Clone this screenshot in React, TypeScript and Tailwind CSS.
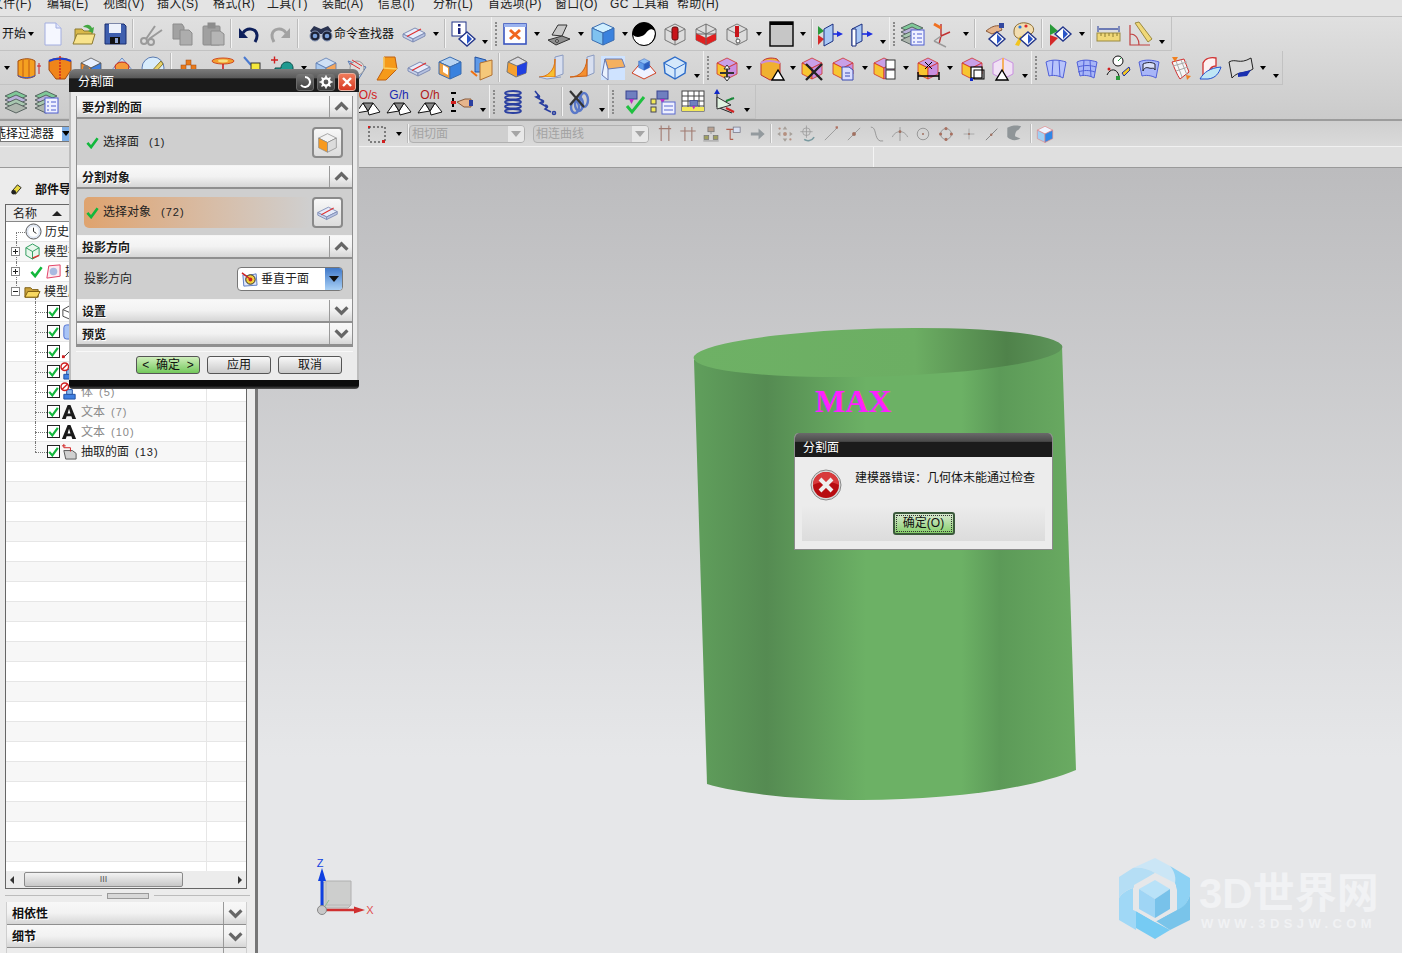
import type { ReactNode } from "react";

const CJK = "font-['Liberation_Sans','Noto_Sans_CJK_SC',sans-serif]";

function Cube({ t, l, r, s = "#555" }: { t: string; l: string; r: string; s?: string }) {
  return (
    <g stroke={s} strokeWidth="0.8" strokeLinejoin="round">
      <polygon points="13,3 23,8 13,13 3,8" fill={t} />
      <polygon points="3,8 13,13 13,24 3,19" fill={l} />
      <polygon points="23,8 13,13 13,24 23,19" fill={r} />
    </g>
  );
}

function Wire({ s = "#777" }: { s?: string }) {
  return (
    <g fill="none" stroke={s} strokeWidth="1">
      <polygon points="13,3 23,8 23,19 13,24 3,19 3,8" />
      <path d="M3 8l10 5 10-5M13 13v11" />
    </g>
  );
}

const Triangle = () => <polygon points="20,15 26,25 14,25" fill="#fff" stroke="#000" strokeWidth="1.4" />;

const purple = { t: "#c9a0e8", l: "#f7c531", r: "#c98fe0", s: "#d0302a" };
const slab = (
  <g strokeLinejoin="round">
    <polygon points="2,13 14,7 24,12 12,18" fill="#e6ecfa" stroke="#7f8db5" />
    <polygon points="2,13 12,18 12,21 2,16" fill="#c9d2ea" stroke="#7f8db5" />
    <polygon points="24,12 12,18 12,21 24,15" fill="#b7c3e2" stroke="#7f8db5" />
    <path d="M6 15.5L20 8" stroke="#e03030" strokeWidth="1.2" />
  </g>
);
const diamond = (
  <g>
    <polygon points="17,11 25,18 17,25 9,18" fill="#fff" stroke="#22358a" strokeWidth="1.4" />
    <polygon points="17,13 22,18 17,23" fill="#2a55c8" />
  </g>
);
const stack = (
  <g stroke="#4e5a58" strokeWidth="0.9">
    <polygon points="12,2 23,7 12,12 1,7" fill="#7fc898" />
    <polygon points="12,6 23,11 12,16 1,11" fill="#b8b0d8" />
    <polygon points="12,10 23,15 12,20 1,15" fill="#a8c8b0" />
    <polygon points="12,14 23,19 12,24 1,19" fill="#aeb6ae" />
  </g>
);
const listBox = (
  <g>
    <rect x="11" y="9" width="13" height="15" fill="#eef0ff" stroke="#4f5fd0" />
    <path d="M13 13h2M17 13h5M13 17h2M17 17h5M13 21h2M17 21h5" stroke="#4f5fd0" strokeWidth="1.2" />
  </g>
);
const probe = (
  <g>
    <rect x="7" y="2" width="11" height="8" fill="#6f7fc0" stroke="#3a4590" />
    <polygon points="10,10 15,10 12.5,15" fill="#c02fc0" />
  </g>
);
const surface = (c: string, grid: ReactNode) => (
  <g>
    <path d="M4 7C10 4 18 5 24 7L21 23C16 20 10 20 7 21Z" fill={c} stroke="#5060d8" />
    {grid}
  </g>
);
const coneSolid = (label: string, c: string) => (
  <g>
    <path d="M1 24L8 14L13 22ZM13 22L18 14L25 23L14 26Z" fill="#fff" stroke="#111" />
    <path d="M8 14L18 14L13 22Z" fill="#888" stroke="#111" />
    <text x="13" y="10" textAnchor="middle" fontSize="12" fill={c} fontFamily="Liberation Sans">{label}</text>
  </g>
);

const icons: Record<string, ReactNode> = {
  doc: <><path d="M5 2h11l5 5v17H5z" fill="#f5f7ff" stroke="#a3aee0" /><path d="M16 2v5h5" fill="#dfe4fb" stroke="#a3aee0" /></>,
  folder: <><path d="M4 8h7l2 2h8v11H4z" fill="#d9b84a" stroke="#8c7a30" /><path d="M2 23l4-10h18l-3 10z" fill="#f8e38c" stroke="#8c7a30" /><path d="M12 6c3-3 7-3 9 1l2-1-1 6-5-2 2-1c-2-2-4-3-7-3z" fill="#43a843" /></>,
  save: <><path d="M3 3h19l2 2v18H3z" fill="#3f5fae" stroke="#1b2f70" /><rect x="7" y="3" width="12" height="9" fill="#eef2fb" /><rect x="8" y="16" width="10" height="7" fill="#111" /><rect x="13" y="17" width="3" height="5" fill="#8fa4d0" /></>,
  scissors: <g fill="none" stroke="#9a9a9a" strokeWidth="2"><circle cx="6" cy="20" r="3" /><circle cx="13" cy="21" r="3" /><path d="M8 18L17 5M11 18L24 9" /></g>,
  copy: <g fill="#a2a2a2" stroke="#8c8c8c"><path d="M4 3h9l2 3v12H4z" /><path d="M11 9h9l3 3v12H11z" fill="#adadad" /></g>,
  paste: <g stroke="#8c8c8c"><rect x="3" y="5" width="17" height="19" rx="1" fill="#a0a0a0" /><rect x="8" y="2" width="7" height="5" fill="#8d8d8d" /><path d="M11 10h9l4 3v11H11z" fill="#b5b5b5" /></g>,
  undo: <g fill="none" stroke="#0d1f5a" strokeWidth="3"><path d="M7 12C11 6 20 7 21 14c.3 3-1 5-2 7" /><path d="M3 7v10h9" fill="#0d1f5a" stroke="none" /></g>,
  redo: <g fill="none" stroke="#a2a2a2" strokeWidth="3"><path d="M19 12C15 6 6 7 5 14c-.3 3 1 5 2 7" /><path d="M23 7v10h-9" fill="#a2a2a2" stroke="none" /></g>,
  binoculars: <g><path d="M2 10l4-5 7 3 7-3 4 5-3 3H5z" fill="#2a3350" /><circle cx="7" cy="15" r="5" fill="#1c2236" stroke="#7f8fb0" /><circle cx="19" cy="15" r="5" fill="#1c2236" stroke="#7f8fb0" /><circle cx="7" cy="15" r="2.300" fill="#7aa0d8" /><circle cx="19" cy="15" r="2.300" fill="#7aa0d8" /></g>,
  slab,
  info: <><rect x="2" y="1" width="14" height="14" fill="#fff" stroke="#22358a" /><rect x="8" y="3" width="2.5" height="2.5" fill="#1a237e" /><rect x="8" y="7" width="2.5" height="6" fill="#1a237e" />{diamond}</>,
  fit: <><rect x="2" y="3" width="22" height="20" fill="#fdfdff" stroke="#3a55c0" strokeWidth="1.6" /><rect x="2" y="3" width="22" height="3" fill="#9bb3ef" /><path d="M8 9l10 9M18 9L8 18" stroke="#f0651f" strokeWidth="3" /></>,
  laptop: <g stroke="#333"><path d="M6 14L12 4h9l-5 11z" fill="#c9c9c9" /><polygon points="2,19 16,15 24,18 10,24" fill="#8e8e8e" /><circle cx="11" cy="20" r="1.4" fill="#ddd" /></g>,
  blue: <><polygon points="13,2 24,7 13,12 2,7" fill="#d0efff" stroke="#3b6db0" /><polygon points="2,7 13,12 13,24 2,19" fill="#7fc2f0" stroke="#3b6db0" /><polygon points="24,7 13,12 13,24 24,19" fill="#3a82de" stroke="#3b6db0" /></>,
  yin: <><circle cx="13" cy="13" r="11.500" fill="#000" /><path d="M2 16c6 5 8-2 11-4s8-3 11 0c0-6-5-10.500-11-10.500-6 0-11.500 6-11 14.500z" fill="#fff" transform="rotate(180 13 13)" /><circle cx="13" cy="13" r="11.500" fill="none" stroke="#000" /></>,
  wirePin: <><Wire /><rect x="10" y="6" width="6" height="13" rx="2" fill="#c8141a" stroke="#601010" /></>,
  wireBox: <><Wire /><path d="M3 12l10 5 10-5v7l-10 5-10-5z" fill="#e02020" /><path d="M13 3v21M3 13h20" stroke="#666" fill="none" /></>,
  wireTack: <><Wire /><rect x="11" y="5" width="4" height="11" fill="#c8141a" /><circle cx="14" cy="20" r="2" fill="#fff" stroke="#555" /></>,
  frame: <><rect x="2" y="1" width="23" height="24" fill="#c6c6c6" stroke="#000" strokeWidth="1.4" /><rect x="2" y="1" width="23" height="3" fill="#000" /></>,
  panelIn: <><polygon points="1,5 7,10 1,14" fill="#2a9a3a" /><polygon points="1,14 7,18 1,24" fill="#d42a2a" /><polygon points="7,8 16,3 16,20 7,25" fill="#a9c8f5" stroke="#1b2f80" /><path d="M16 13h8" stroke="#1e2fe0" strokeWidth="1.6" /><polygon points="20,10 26,13 20,16" fill="#1e2fe0" /></>,
  panelOut: <><polygon points="4,8 14,3 14,20 4,25" fill="#a9c8f5" stroke="#1b2f80" /><polygon points="4,8 8,8 8,25 4,25" fill="#fff" stroke="#1b2f80" /><path d="M14 13h8" stroke="#1e2fe0" strokeWidth="1.6" /><polygon points="19,10 25,13 19,16" fill="#1e2fe0" /></>,
  layersList: <>{stack}{listBox}</>,
  csys: <g fill="none" strokeWidth="1.4"><path d="M10 15L19 11M10 15V3M10 15l-2 8" stroke="#c03030" /><path d="M3 20l7-5M3 20l12 6" stroke="#9a9a9a" /><path d="M3 3l7 4" stroke="#f07020" strokeWidth="3" /></g>,
  hand: <><path d="M6 10c5-4 9-6 14-5l2 4-10 4z" fill="#e6b58c" stroke="#8a5a3a" /><rect x="19" y="2" width="5" height="5" fill="#33489f" />{diamond}</>,
  palette: <><path d="M3 10c0-6 6-9 12-8s9 5 7 9-9 1-10 4-5 3-7 1-2-3-2-6z" fill="#f2ddb0" stroke="#8a6a30" /><circle cx="9" cy="6" r="1.6" fill="#2a7ae0" /><circle cx="15" cy="5" r="1.6" fill="#e02a2a" /><path d="M4 24l5-9 3 1-4 9z" fill="#f2c520" />{diamond}</>,
  playDiamond: <><polygon points="3,3 11,10 3,14" fill="#2a9a3a" /><polygon points="3,14 11,17 3,25" fill="#d42a2a" /><g transform="translate(-1,-5)">{diamond}</g></>,
  ruler: <><rect x="1" y="12" width="23" height="8" fill="#f0d878" stroke="#9a8a40" /><path d="M5 12v3M9 12v4M13 12v3M17 12v4M21 12v3" stroke="#8a7a30" /><path d="M3 8h19" stroke="#223a9a" strokeWidth="1.2" /><path d="M2 5v6M23 5v6" stroke="#223a9a" /></>,
  angle: <><path d="M8 2l4-1 13 17-4 3z" fill="#f0d878" stroke="#9a8a40" /><path d="M3 4v20h20M3 13c6 0 9 5 9 11" fill="none" stroke="#c04040" strokeWidth="1.2" /></>,
  extrude: <><path d="M2 6c5-3 13-3 17 0v15c-5 3-12 3-17 0z" fill="#f5a020" stroke="#a04a10" /><path d="M7 5v18M13 5v18" stroke="#c05a10" /><path d="M2 20c5 3 12 3 17 0v1c-5 3-12 3-17 0z" fill="#3a5ad0" /><path d="M23 8v11M21 11h4" stroke="#d02020" /></>,
  revolve: <><path d="M2 6c6-4 16-4 22 0v9l-6 9H9l-7-9z" fill="#f0851a" stroke="#a04a10" /><path d="M2 6c6-3 16-3 22 0" fill="none" stroke="#2040d0" strokeWidth="2" /><path d="M13 1v24" stroke="#d02020" strokeDasharray="2 1" strokeWidth="1.4" /></>,
  hole: <><Cube t="#e8f0ff" l="#f28a2a" r="#3f7fe0" /><ellipse cx="8" cy="14" rx="3" ry="4" fill="#777" /></>,
  dome: <><path d="M2 16L13 3l11 13-11 7z" fill="#cfe4fa" stroke="#6a8ac0" /><ellipse cx="13" cy="12" rx="7" ry="5" fill="#f59a3a" stroke="#c02020" /></>,
  disc: <><circle cx="13" cy="13" r="11" fill="#d8ecfb" stroke="#5a7ab0" /><path d="M8 20L21 6l2 3L11 22z" fill="#e9d36a" stroke="#8a7a30" /></>,
  dots: <g fill="#e87a1a" stroke="#a04a10" strokeWidth="0.5"><rect x="10" y="5" width="5" height="5" /><rect x="5" y="10" width="5" height="5" /><rect x="15" y="10" width="5" height="5" /><rect x="1" y="15" width="5" height="5" /><rect x="10" y="15" width="5" height="5" /><rect x="20" y="15" width="5" height="5" /></g>,
  pinDisc: <><ellipse cx="13" cy="6" rx="11" ry="3" fill="#f2a030" stroke="#d04a20" /><ellipse cx="13" cy="6" rx="5" ry="1.4" fill="#f8e080" /><path d="M13 9v13" stroke="#d02020" strokeWidth="1.6" /><path d="M10 22h6" stroke="#d02020" /></>,
  corner: <><path d="M3 2l7 8" stroke="#4a7ad0" strokeWidth="2" /><rect x="10" y="8" width="9" height="9" fill="#f5e83a" stroke="#333" /><path d="M3 24h16" stroke="#888" /></>,
  plusBoss: <><path d="M2 5h7M5.5 1.500v7" stroke="#d02020" strokeWidth="1.4" /><path d="M6 13h6c0-8 12-8 12 0v9H6z" fill="#1f9a90" stroke="#0b4a46" /></>,
  ghost: <><Cube t="#cfe0f5" l="#a8c8ee" r="#f6a65a" s="#5a7ab0" /></>,
  cutPlane: <><path d="M4 6L22 12 14 25z" fill="#bcd4f2" stroke="#5a7ab0" /><circle cx="13" cy="13" r="7" fill="#dcdcdc" stroke="#999" /><path d="M8 5l10 6M6 8l10 6" stroke="#e03030" /></>,
  flame: <><path d="M9 2h11l2 12L11 25H2l7-12z" fill="#f59a1a" stroke="#c06010" /><path d="M9 2v11l13 1" fill="none" stroke="#fbd060" strokeWidth="1.5" /></>,
  shell: <><polygon points="13,2 24,7 13,12 2,7" fill="#b8d4f2" stroke="#3b6db0" /><polygon points="2,7 13,12 13,24 2,19" fill="#f0a040" stroke="#3b6db0" /><polygon points="24,7 13,12 13,24 24,19" fill="#3a82de" stroke="#3b6db0" /><polygon points="6,10 11,13 11,20 6,17" fill="#fff" /></>,
  offsetFace: <><path d="M7 2l11 3v12H7z" fill="#5f9ae8" stroke="#2050a0" /><path d="M12 8l12-3v15l-12 5z" fill="#f5c87a" stroke="#b07030" /><path d="M3 16l6 5" stroke="#f07010" strokeWidth="2" /></>,
  blend: <><path d="M4 7l10-5 9 5-1 11-10 4-9-5z" fill="#f5a030" stroke="#777" /><polygon points="4,7 14,2 23,7 13,11" fill="#dcdce2" stroke="#777" /><polygon points="13,11 23,7 22,18 13,21" fill="#2040e0" /></>,
  fillet1: <><path d="M17 2l8-2v19l-8 3z" fill="#d8dff0" stroke="#8a9ac0" /><path d="M1 22c8 0 16-6 16-18v18z" fill="#f8c030" stroke="#e07010" /><path d="M1 22l8 2 14-2" stroke="#8a9ac0" fill="#d8dff0" /></>,
  fillet2: <><path d="M18 2l7-2v18l-7 3z" fill="#d8dff0" stroke="#8a9ac0" /><path d="M1 22c9 0 16-6 17-18v17z" fill="#f59030" stroke="#d06010" /></>,
  chamfer: <><rect x="1" y="1" width="24" height="24" fill="#cfe3ff" /><polygon points="5,4 22,4 25,12 8,14" fill="#f5b060" stroke="#6a7ab0" /><polygon points="5,4 8,14 8,25 2,20" fill="#eaf2ff" stroke="#6a7ab0" /></>,
  pyramid: <><polygon points="13,4 25,18 13,24 1,18" fill="#eef2ff" stroke="#d04020" /><g transform="translate(6,2) scale(.55)"><Cube t="#8fc0f5" l="#5f9ae8" r="#2a5fc0" s="#2a5fc0" /></g></>,
  wireBlue: <><polygon points="13,2 24,8 23,18 13,24 3,18 2,8" fill="#d4e8fb" stroke="#2a6ac8" strokeWidth="1.4" /><path d="M2 8l11 6 11-6M13 14v10" stroke="#2a6ac8" fill="none" /></>,
  moveFace: <><Cube {...purple} /><path d="M13 12v13M6 18h14" stroke="#333" strokeWidth="2" /><polygon points="13,10 16,14 10,14" fill="#fff" stroke="#333" /><polygon points="13,26 16,22 10,22" fill="#fff" stroke="#333" /></>,
  coneFace: <><path d="M3 8c3-5 10-6 16-4l3 4v13l-10 4-9-5z" fill="#f0b030" stroke="#c03030" /><path d="M3 8c6-3 13-2 19 0" fill="none" stroke="#c98fe0" strokeWidth="2" /><Triangle /></>,
  xFace: <><Cube {...purple} /><path d="M7 9l16 16M23 9L7 25" stroke="#222" strokeWidth="2.4" /></>,
  copyFace: <><Cube {...purple} /><path d="M12 12h7l4 3v10H12z" fill="#d8dcff" stroke="#3a4ab0" /><path d="M15 18h5M15 21h5" stroke="#3a4ab0" /></>,
  splitFace: <><Cube {...purple} /><rect x="15" y="5" width="9" height="9" fill="#fff" stroke="#333" /><rect x="15" y="15" width="9" height="9" fill="#fff" stroke="#333" /></>,
  dimFace: <><Cube {...purple} /><path d="M3 21h21M3 17v8M24 17v8" stroke="#000" strokeWidth="1.4" /><path d="M10 7l7 7M17 7l-7 7" stroke="#000" /></>,
  boxFace: <><Cube {...purple} /><rect x="12" y="12" width="11" height="11" fill="#fff" stroke="#000" strokeWidth="1.2" /><rect x="15" y="15" width="10" height="9" fill="none" stroke="#000" /><rect x="11" y="23" width="3" height="3" fill="#1028c8" /></>,
  triFace: <><polygon points="13,3 23,8 23,19 13,24 3,19 3,8" fill="#f1e1f5" stroke="#c98fe0" /><path d="M13 3v21" stroke="#f5b060" strokeWidth="2" /><g transform="translate(-8,0)"><Triangle /></g></>,
  surf1: surface("#b8c4fb", <path d="M11 5l-1 16M17 5l1 17" stroke="#5060d8" fill="none" />),
  surf2: surface("#a8b6f8", <path d="M11 5l-1 16M17 5l1 17M5 12c6-2 12-2 18 0M5 17c6-2 11-2 17 0" stroke="#5060d8" fill="none" />),
  curveEdit: <><circle cx="14" cy="6" r="5" fill="#fff" stroke="#111" /><path d="M14 6l3-3" stroke="#1a9a3a" /><path d="M3 20c3-7 10-7 12 1" fill="none" stroke="#111" /><circle cx="5" cy="14" r="1.5" fill="#d02020" /><path d="M18 18l7-6 1 3-6 6z" fill="#f2c520" stroke="#2030a0" /><rect x="12" y="21" width="4" height="4" fill="#2a9a3a" /></>,
  surf3: surface("#a8b6f8", <path d="M8 9c4-2 9-2 12 0v6c-1-3-3-1-6-2s-5 0-6 3z" fill="#d8def8" stroke="#223" />),
  meshArrows: <><path d="M6 7l12-3 5 13-9 7C11 20 8 12 6 7z" fill="#f6f6f6" stroke="#d03030" /><path d="M10 6l6 16M15 5l6 15M7 11l14-4M10 16l12-4" stroke="#aaa" /><polygon points="6,2 12,2 9,7" fill="#f08020" /><polygon points="20,20 25,21 21,25" fill="#f08020" /></>,
  loft: <><path d="M6 8c2-5 8-6 13-5v8c-4 0-6 2-7 6l-6 3z" fill="#fdf2f2" stroke="#d03030" strokeWidth="1.3" /><path d="M3 24c4-7 10-11 21-12-2 6-5 11-13 12z" fill="#bfe6f5" stroke="#2050d0" /></>,
  cloth: <><path d="M1 7c7-4 10 3 22-4l2 11c-9 6-14 1-21 9z" fill="#d9d9d9" stroke="#222" /><path d="M10 18l13-3-4 6-9 1z" fill="#1a30b0" /></>,
  coil: <g fill="none" stroke="#2a3fa0" strokeWidth="1.8"><ellipse cx="13" cy="4" rx="8" ry="2" /><ellipse cx="13" cy="8.500" rx="8" ry="2" /><ellipse cx="13" cy="13" rx="8" ry="2" /><ellipse cx="13" cy="17.500" rx="8" ry="2" /><ellipse cx="13" cy="22" rx="8" ry="2" /></g>,
  spring: <g fill="none" stroke="#2a3fa0" strokeWidth="1.6"><path d="M4 2l4 5-3 1 7 4-3 2 7 4-2 2 6 3" /><path d="M6 6c3 0 3 3 1 3M10 11c3 0 3 3 1 3M14 16c3 0 3 3 1 3" /><circle cx="23" cy="24" r="1.5" /></g>,
  coilX: <><g fill="none" stroke="#5a78c8" strokeWidth="2.4"><ellipse cx="17" cy="11" rx="4" ry="7" /><ellipse cx="12" cy="15" rx="4" ry="7" /><ellipse cx="8" cy="18" rx="4" ry="6" /></g><path d="M3 2l14 16M15 2L3 16" stroke="#333" strokeWidth="2.2" /></>,
  stackL: <g><g transform="translate(1,0)">{stack}</g></g>,
  stackM: <>{stack}{listBox}</>,
  coneOs: coneSolid("O/s", "#d02020"),
  coneGh: coneSolid("G/h", "#1a28b0"),
  coneOh: coneSolid("O/h", "#b01a1a"),
  handPoint: <><path d="M3 4h5M3 22h5M5 9v9" stroke="#000" strokeWidth="2" /><rect x="3" y="12" width="5" height="3" fill="#d02020" /><path d="M9 13l8-3h6v8h-7z" fill="#e6b58c" stroke="#8a5a3a" /><rect x="21" y="11" width="4" height="6" fill="#2a3fa0" /></>,
  probeCheck: <>{probe}<path d="M8 17l5 6L25 8" fill="none" stroke="#1fc040" strokeWidth="3" /></>,
  probeTree: <>{probe}<rect x="1" y="10" width="5" height="5" fill="#f2e85a" stroke="#445" /><rect x="1" y="18" width="5" height="5" fill="#f2e85a" stroke="#445" /><rect x="12" y="13" width="13" height="12" fill="#eef0ff" stroke="#5a6ad0" /><path d="M14 17h9M14 21h9" stroke="#5a6ad0" /></>,
  probeTable: <><g fill="#fff" stroke="#444"><rect x="1" y="2" width="22" height="20" /></g><path d="M1 7h22M1 12h22M1 17h22M7 2v20M13 2v20M18 2v20" stroke="#444" fill="none" /><rect x="1" y="18" width="22" height="4" fill="#f2e85a" /><g transform="translate(4,10) scale(.7)">{probe}</g></>,
  probeAxes: <><path d="M5 2v16l15 6M5 18l15-9" fill="none" stroke="#222" /><path d="M5 8l14 8-14 4z" fill="#dff2e0" stroke="#333" /><polygon points="2,5 8,5 5,0" fill="#1028c8" /><path d="M14 12l8-3" stroke="#1a8a3a" strokeWidth="2" /><path d="M14 19l8 4" stroke="#d02020" strokeWidth="2" /></>,
  gRect: <><rect x="5" y="6" width="16" height="15" fill="none" stroke="#222" strokeDasharray="2 2" /><rect x="18" y="19" width="3" height="3" fill="#d02020" /><rect x="4" y="5" width="2" height="2" fill="#d02020" /></>,
  gTee1: <path d="M5 6h16M8 2v20M18 2v20" stroke="#a07a70" fill="none" strokeWidth="1.4" />,
  gTee2: <path d="M3 9h20M9 4v18M18 4v18" stroke="#a07a70" fill="none" strokeWidth="1.4" />,
  gNet: <><rect x="9" y="4" width="8" height="6" fill="#b8a090" stroke="#777" /><rect x="4" y="15" width="6" height="5" fill="#a0a060" stroke="#777" /><rect x="16" y="15" width="6" height="5" fill="#a0a060" stroke="#777" /><path d="M13 10v3M3 22h20" stroke="#888" /></>,
  gSwitch: <><rect x="12" y="4" width="9" height="7" fill="#d8dff0" stroke="#778" /><path d="M3 7h9M8 7v13M8 20h4" stroke="#b06050" strokeWidth="1.4" fill="none" /></>,
  gArrow: <path d="M5 11h10V6l8 7-8 7v-5H5z" fill="#939a9e" />,
  gMove: <g fill="#a6a09a"><path d="M13 3l3 4h-6zM13 23l3-4h-6zM3 13l4-3v6zM23 13l-4-3v6z" /><circle cx="13" cy="13" r="2.500" fill="#b59080" /><circle cx="6" cy="6" r="1.500" fill="#b59080" /><circle cx="20" cy="20" r="1.500" fill="#b59080" /></g>,
  gSpin: <g fill="none" stroke="#999"><circle cx="11" cy="10" r="5" /><path d="M11 2v16M3 10h16" /><path d="M8 20c4 3 10 2 13-3" stroke="#7a9aa0" strokeWidth="2" /></g>,
  gLine: <g stroke="#999" strokeWidth="1.2"><path d="M5 21L21 5" /><rect x="19" y="3" width="3" height="3" fill="#b07060" stroke="none" /></g>,
  gMid: <g stroke="#999" strokeWidth="1.2"><path d="M5 21L21 5" /><circle cx="13" cy="13" r="2.500" fill="#a07060" stroke="none" /></g>,
  gCurve: <path d="M5 4c8 0 4 15 12 18h4" fill="none" stroke="#999" strokeWidth="1.3" />,
  gTan: <g fill="none" stroke="#999" strokeWidth="1.2"><path d="M3 17c3-6 7-7 10-7s7 1 10 7M13 4v18" /><circle cx="13" cy="10" r="1.800" fill="#a07060" stroke="none" /></g>,
  gCircle: <g fill="none" stroke="#999" strokeWidth="1.3"><circle cx="13" cy="13" r="7.500" /><circle cx="13" cy="13" r="1.300" fill="#a07060" stroke="none" /></g>,
  gQuad: <g fill="none" stroke="#999" strokeWidth="1.3"><circle cx="13" cy="13" r="7" /><g fill="#a87060" stroke="none"><circle cx="13" cy="6" r="2" /><circle cx="13" cy="20" r="2" /><circle cx="6" cy="13" r="2" /><circle cx="20" cy="13" r="2" /></g></g>,
  gPlus: <g stroke="#aaa" strokeWidth="1.3"><path d="M13 6v14M6 13h14" /><circle cx="13" cy="13" r="1.200" fill="#a07060" stroke="none" /></g>,
  gSeg: <g stroke="#888" strokeWidth="1.3"><path d="M5 21L20 6" /><circle cx="12" cy="14" r="1.600" fill="#a07060" stroke="none" /></g>,
  gFace: <path d="M3 5c7-4 14-3 18-2l-3 4c-3 1-5 4-5 9l7 3c-6 3-12 3-17-2z" fill="#8f9598" />,
  gCube: <><Cube t="#f0f4ff" l="#9fd0f5" r="#2f86e6" s="#e08080" /></>,
};

function Icon({ name }: { name: string }) {
  return (
    <div className="flex h-full w-[31px] shrink-0 items-center justify-center">
      <svg viewBox="0 0 26 26" className="h-[26px] w-[26px] overflow-visible">
        {icons[name]}
      </svg>
    </div>
  );
}

function DropArrow({ low }: { low?: boolean }) {
  return (
    <div className={`flex h-full w-[13px] shrink-0 justify-center ${low ? "items-end pb-[6px]" : "items-center"}`}>
      <div className="h-0 w-0 border-x-[3.5px] border-t-[4px] border-x-transparent border-t-black" />
    </div>
  );
}

function Separator() {
  return (
    <div className="flex h-full w-[5px] shrink-0 justify-center py-[2px]">
      <div className="h-full w-[2px] border-l border-r border-l-[#bcbcbc] border-r-[#f3f3f3]" />
    </div>
  );
}

function Grip() {
  return (
    <div className="flex h-full w-[8px] shrink-0 items-center justify-center border-l border-l-[#f1f1f1]">
      <div className="h-[24px] w-[2px] border-l-2 border-dotted border-[#8a8a8a]" />
    </div>
  );
}

// "v" drop arrow, "_" low drop arrow, "|" separator, ":" grip, "." small spacer, "," pull back
function renderTools(list: string) {
  return list.split(" ").map((t, i) => {
    if (t === "v") return <DropArrow key={i} />;
    if (t === "_") return <DropArrow key={i} low />;
    if (t === "|") return <Separator key={i} />;
    if (t === ":") return <Grip key={i} />;
    if (t === ".") return <div key={i} className="w-[3px] shrink-0" />;
    if (t === ",") return <div key={i} className="-ml-[3px]" />;
    return <Icon key={i} name={t} />;
  });
}

const menus = [
  ["文件(F)", "w-[43px]"],
  ["编辑(E)", "w-[43px]"],
  ["视图(V)", "w-[41px]"],
  ["插入(S)", "w-[43px]"],
  ["格式(R)", "w-[41px]"],
  ["工具(T)", "w-[42px]"],
  ["装配(A)", "w-[43px]"],
  ["信息(I)", "w-[42px]"],
  ["分析(L)", "w-[42px]"],
  ["首选项(P)", "w-[54px]"],
  ["窗口(O)", "w-[42px]"],
  ["GC 工具箱", "w-[54px]"],
  ["帮助(H)", "w-[43px]"],
];

function MenuBar() {
  return (
    <div className="flex h-[17px] shrink-0 overflow-hidden border-b border-[#bdbdbd] bg-[#e4e4e4] text-[12px] leading-[10px] tracking-[0.3px] text-[#222]">
      <div className="-ml-[9px] flex gap-[13px]">
        {menus.map(([label, w]) => (
          <span key={label} className={`${w} -mt-[1px] whitespace-nowrap`}>{label}</span>
        ))}
      </div>
    </div>
  );
}

function Toolbars() {
  return (
    <div className="flex h-[102px] shrink-0 flex-col bg-gradient-to-b from-[#e0e0e0] to-[#cbcbcb]">
      <div className="flex h-[34px] w-[1172px] items-stretch border-b border-r border-[#c2c2c2]">
        <div className="flex w-[37px] shrink-0 items-center pl-[2px] text-[12px] text-[#111]">
          <span>开始</span>
          <span className="ml-[2px] h-0 w-0 border-x-[3px] border-t-[4px] border-x-transparent border-t-black" />
        </div>
        {renderTools("doc folder save | scissors copy paste | undo redo |")}
        <div className="flex w-[98px] shrink-0 items-center pl-[5px]">
          <Icon name="binoculars" />
          <span className="-ml-[2px] whitespace-nowrap text-[12px] text-[#111]">命令查找器</span>
        </div>
        {renderTools("slab v | info _ : fit v laptop v blue v , yin wirePin wireBox wireTack v frame v | panelIn panelOut _ : layersList csys v | hand palette | playDiamond v | ruler angle _")}
      </div>
      <div className="flex h-[34px] w-[1283px] items-stretch border-b border-r border-[#c2c2c2]">
        {renderTools("v extrude revolve hole dome disc | dots . pinDisc corner , plusBoss v ghost cutPlane flame slab shell offsetFace | blend . fillet1 fillet2 chamfer pyramid wireBlue _ : moveFace v coneFace v , xFace copyFace v , splitFace v dimFace v boxFace triFace _ : surf1 surf2 curveEdit surf3 meshArrows loft cloth v _")}
      </div>
      <div className="flex h-[34px] w-[756px] items-stretch border-b border-r border-[#c2c2c2]">
        {renderTools("stackL stackM")}
        <div className="w-[290px] shrink-0" />
        {renderTools("coneOs coneGh coneOh handPoint _ : coil spring | coilX _ : probeCheck probeTree probeTable probeAxes _")}
      </div>
    </div>
  );
}

function Combo({ label, width }: { label: string; width: string }) {
  return (
    <div className={`${width} flex h-[18px] shrink-0 items-center justify-between rounded-[4px] border border-[#b0b0b0] bg-[#cfcfcf] pl-[2px] text-[12px] text-[#a3a3a3]`}>
      <span>{label}</span>
      <div className="flex h-full w-[16px] items-center justify-center rounded-r-[3px] bg-[#e8e8e8]">
        <div className="h-0 w-0 border-x-[5px] border-t-[6px] border-x-transparent border-t-[#a5a5a5]" />
      </div>
    </div>
  );
}

function SelectionBar() {
  return (
    <div className="flex h-[28px] shrink-0 items-stretch border-t-2 border-b border-t-[#9c9c9c] border-b-[#f1f1f1] bg-gradient-to-b from-[#cfcfcf] to-[#dadada] py-[1px]">
      <div className="flex w-[71px] shrink-0 items-center">
        <div className="flex h-[16px] w-full items-center overflow-hidden border border-[#777] bg-white text-[12px] leading-none text-[#111]">
          <span className="-ml-[7px] w-[68px] shrink-0 whitespace-nowrap">选择过滤器</span>
          <div className="ml-auto flex h-full w-[10px] items-center justify-center bg-[#7fb0e8]">
            <div className="h-0 w-0 border-x-[4px] border-t-[5px] border-x-transparent border-t-black" />
          </div>
        </div>
      </div>
      <div className="w-[290px] shrink-0" />
      {renderTools("gRect v |")}
      <div className="-ml-[1px] flex items-center gap-[8px]">
        <Combo label="相切面" width="w-[116px]" />
        <Combo label="相连曲线" width="w-[116px]" />
      </div>
      <div className="flex h-full items-center pl-[4px] [&>div]:w-[23px] [&_svg]:h-[20px] [&_svg]:w-[20px]">
        {renderTools("gTee1 gTee2 gNet gSwitch gArrow")}
      </div>
      <Separator />
      <div className="flex h-full items-center pr-[2px] [&>div]:w-[23px] [&_svg]:h-[20px] [&_svg]:w-[20px]">
        {renderTools("gMove gSpin gLine gMid gCurve gTan gCircle gQuad gPlus gSeg gFace")}
      </div>
      <Separator />
      <div className="flex h-full items-center [&>div]:w-[24px] [&_svg]:h-[20px] [&_svg]:w-[20px]">
        {renderTools("gCube")}
      </div>
    </div>
  );
}

function StatusBar() {
  return (
    <div className="flex h-[21px] shrink-0 border-b border-[#9a9a9a] bg-[#dfdfdf]">
      <div className="w-[874px] border-r border-r-[#f4f4f4]" />
    </div>
  );
}

function Chevron({ up, size = "h-[11px] w-[15px]" }: { up?: boolean; size?: string }) {
  return (
    <svg viewBox="0 0 14 10" className={size}>
      <polyline points={up ? "1.500,8 7,2.500 12.500,8" : "1.500,2 7,7.500 12.500,2"} fill="none" stroke="#666" strokeWidth="3" />
    </svg>
  );
}

function SectionHeader({ title, up }: { title: string; up?: boolean }) {
  return (
    <div className="flex h-[23px] shrink-0 items-stretch border-b-2 border-[#8f8f8f] bg-gradient-to-b from-[#f8f8f8] via-[#f2f2f2] to-[#d6d6d6]">
      <div className="flex flex-1 items-center pl-[5px] pt-[2px] text-[12px] font-bold text-[#1a1a1a] [text-shadow:1px_1px_0_#fff]">{title}</div>
      <div className="flex w-[23px] items-center justify-center border-l border-[#9a9a9a]">
        <Chevron up={up} />
      </div>
    </div>
  );
}

const Check = ({ className = "h-[13px] w-[13px]" }: { className?: string }) => (
  <svg viewBox="0 0 14 14" className={`shrink-0 ${className}`}>
    <path d="M1.500 7.500L5.500 12L12.500 2.500" fill="none" stroke="#12b83c" strokeWidth="2.800" />
  </svg>
);

function SelectButton({ children }: { children: ReactNode }) {
  return (
    <div className="flex h-[31px] w-[31px] items-center justify-center rounded-[4px] border-2 border-[#8a8a8a] bg-gradient-to-b from-[#f8f8f8] to-[#dcdcdc]">
      <svg viewBox="0 0 26 26" className="h-[23px] w-[23px]">{children}</svg>
    </div>
  );
}

function DialogButton({ label, primary }: { label: string; primary?: boolean }) {
  return (
    <div className={`flex h-[18px] w-[64px] items-center justify-center whitespace-pre rounded-[3px] border border-[#555] text-[12px] leading-none text-[#111] ${primary ? "bg-gradient-to-b from-[#cfeebb] to-[#72c85a]" : "bg-gradient-to-b from-[#f8f8f8] to-[#c9c9c9]"}`}>
      {label}
    </div>
  );
}

function TitleButton({ children, red }: { children: ReactNode; red?: boolean }) {
  return (
    <div className={`flex h-[18px] w-[18px] items-center justify-center rounded-[3px] border ${red ? "border-[#eab0a0] bg-gradient-to-b from-[#f07a5a] to-[#d83a24]" : "border-[#6a6a6a] bg-gradient-to-b from-[#777] to-[#3c3c3c]"}`}>
      <svg viewBox="0 0 14 14" className="h-[14px] w-[14px]">{children}</svg>
    </div>
  );
}

function Count({ value }: { value: string }) {
  return <span className="ml-[6px] text-[11px] tracking-[1px]">{value}</span>;
}

function SplitDialog() {
  return (
    <div className={`absolute left-[69px] top-[69px] flex h-[320px] w-[290px] flex-col overflow-hidden rounded-t-[6px] rounded-b-[4px] ${CJK}`}>
      <div className="flex h-[23px] shrink-0 items-center justify-between bg-[linear-gradient(#7c7c7c,#585858_40%,#1b1b1b_42%,#1b1b1b)] pl-[9px] pr-[3px] pt-[2px]">
        <span className="text-[12px] leading-none text-white">分割面</span>
        <div className="flex gap-[3px]">
          <TitleButton>
            <path d="M7 2a5 5 0 1 1-4 8" fill="none" stroke="#fff" strokeWidth="2" />
          </TitleButton>
          <TitleButton>
            <circle cx="7" cy="7" r="3.600" fill="none" stroke="#fff" strokeWidth="2.400" />
            <path d="M7 0.500v2.500M7 11v2.500M.5 7H3M11 7h2.500M2.500 2.500l2 2M9.500 9.500l2 2M11.500 2.500l-2 2M4.500 9.500l-2 2" stroke="#fff" strokeWidth="1.600" />
          </TitleButton>
          <TitleButton red>
            <path d="M3 3l8 8M11 3l-8 8" stroke="#fff" strokeWidth="2.400" />
          </TitleButton>
        </div>
      </div>
      <div className="flex flex-1 flex-col border-x-2 border-x-[#bdbdbd] bg-[#ebebeb] pl-[5px] pr-[4px] pt-[4px]">
        <div className="border-x border-b border-[#8f8f8f]">
          <SectionHeader title="要分割的面" up />
          <div className="flex h-[47px] items-center justify-between border-b border-[#f4f4f4] bg-[#cfcfcf] pl-[9px] pr-[9px] text-[12px] text-[#222]">
            <div className="flex items-center gap-[4px]">
              <Check />
              <span>选择面</span>
              <Count value="(1)" />
            </div>
            <SelectButton>
              <Cube t="#f2f2f2" l="#f79a20" r="#dcdcdc" s="#888" />
            </SelectButton>
          </div>
          <SectionHeader title="分割对象" up />
          <div className="flex h-[47px] items-center justify-between border-b border-[#f4f4f4] bg-[#cfcfcf] pl-[7px] pr-[9px] text-[12px] text-[#222]">
            <div className="flex h-[31px] w-[226px] items-center gap-[4px] rounded-[5px] bg-gradient-to-r from-[#dfa36e] to-[#cfcfcf] pl-[2px]">
              <Check />
              <span>选择对象</span>
              <Count value="(72)" />
            </div>
            <SelectButton>{slab}</SelectButton>
          </div>
          <SectionHeader title="投影方向" up />
          <div className="flex h-[41px] items-center justify-between border-b border-[#f4f4f4] bg-[#cfcfcf] pl-[7px] pr-[9px] text-[12px] text-[#222]">
            <span>投影方向</span>
            <div className="flex h-[24px] w-[106px] items-stretch overflow-hidden rounded-[4px] border border-[#777] bg-white">
              <div className="flex flex-1 items-center gap-[3px] pl-[3px]">
                <svg viewBox="0 0 18 18" className="h-[17px] w-[17px]">
                  <path d="M2 4l5 1 9-2 1 12-14 1z" fill="#dfe6fb" stroke="#5a7ac0" />
                  <circle cx="10" cy="9" r="5" fill="#f0d040" stroke="#222" />
                  <circle cx="10" cy="9" r="2" fill="#d02020" />
                  <path d="M1 2l8 6" stroke="#d02020" strokeWidth="1.500" />
                </svg>
                <span>垂直于面</span>
              </div>
              <div className="flex w-[17px] items-center justify-center bg-gradient-to-b from-[#3f78c8] to-[#a9d0f5]">
                <div className="h-0 w-0 border-x-[5px] border-t-[6px] border-x-transparent border-t-[#111]" />
              </div>
            </div>
          </div>
          <SectionHeader title="设置" />
          <SectionHeader title="预览" />
        </div>
        <div className="mt-[4px] h-px bg-[#f8f8f8]" />
        <div className="flex items-center gap-[7px] pl-[60px] pt-[4px]">
          <DialogButton label="<  确定  >" primary />
          <DialogButton label="应用" />
          <DialogButton label="取消" />
        </div>
      </div>
      <div className="h-[9px] shrink-0 bg-[linear-gradient(#0c0c0c,#0c0c0c_65%,#555)]" />
    </div>
  );
}

function ErrorDialog() {
  return (
    <div className="absolute left-[536px] top-[265px] flex h-[117px] w-[259px] flex-col overflow-hidden rounded-t-[5px] border-b border-x border-[#8a8a8a] bg-[#ececec]">
      <div className="flex h-[24px] shrink-0 items-end bg-[linear-gradient(#6a6a6a,#4a4a4a_35%,#1b1b1b_38%,#1b1b1b)] pb-[3px] pl-[8px]">
        <span className="text-[12px] leading-none text-white">分割面</span>
      </div>
      <div className="flex h-[48px] shrink-0 pl-[15px] pt-[12px]">
        <svg viewBox="0 0 32 32" className="h-[32px] w-[32px]">
          <circle cx="16" cy="16" r="15" fill="#d8d8d8" stroke="#888" />
          <circle cx="16" cy="16" r="13" fill="#b80c10" />
          <path d="M3 16a13 13 0 0 1 26 0c-6-4-20-4-26 0z" fill="#d83a3c" />
          <path d="M10 10l12 12M22 10L10 22" stroke="#eee" strokeWidth="4" />
        </svg>
        <span className="ml-[13px] mt-[1px] whitespace-nowrap text-[12px] leading-[17px] text-[#111]">建模器错误：几何体未能通过检查</span>
      </div>
      <div className="mx-[7px] flex h-[36px] items-center justify-center bg-gradient-to-b from-[#ececec] to-[#dcdcdc]">
        <div className="flex h-[23px] w-[62px] items-center justify-center rounded-[3px] border-2 border-[#3c5a3c] bg-gradient-to-b from-[#d8e8cf] to-[#86cf6a] text-[12px] leading-none text-[#111]">
          <span className="flex h-[17px] w-[56px] items-center justify-center border border-dotted border-[#333]">确定(O)</span>
        </div>
      </div>
    </div>
  );
}

function RowIcon({ children }: { children: ReactNode }) {
  return <svg viewBox="0 0 18 18" className="h-[17px] w-[17px] shrink-0 overflow-visible">{children}</svg>;
}

const CheckBox = () => (
  <div className="-mr-[1px] flex h-[13px] w-[13px] shrink-0 items-center justify-center border border-[#222] bg-white">
    <Check className="h-[11px] w-[11px]" />
  </div>
);

const Expander = ({ minus }: { minus?: boolean }) => (
  <div className="relative flex h-[9px] w-[9px] shrink-0 items-center justify-center border border-[#888] bg-white">
    <div className="h-px w-[5px] bg-[#222]" />
    {!minus && <div className="absolute h-[5px] w-px bg-[#222]" />}
  </div>
);

const blocked = (
  <>
    <path d="M3 12h12v5H3z" fill="#3f7fe0" stroke="#1f4fa0" />
    <path d="M6 7h6v5H6z" fill="#8fbcf0" stroke="#1f4fa0" />
    <circle cx="4" cy="4" r="4" fill="#fff" stroke="#d02020" strokeWidth="1.500" />
    <path d="M1 7l6-6" stroke="#d02020" strokeWidth="1.500" />
  </>
);

type TreeRow = { indent: string; box?: boolean; exp?: "+" | "-"; check?: boolean; icon: ReactNode; text?: string; count?: string; muted?: boolean };

const treeRows: TreeRow[] = [
  { indent: "pl-[19px]", icon: <><circle cx="9" cy="9" r="8" fill="#dfe6f2" stroke="#555" /><circle cx="9" cy="9" r="5.500" fill="#fff" /><path d="M9 5v4l3 2" stroke="#222" fill="none" /></>, text: "历史记录" },
  { indent: "pl-[5px]", exp: "+", icon: <><polygon points="9,1 16,5 16,13 9,17 2,13 2,5" fill="#e9f7ec" stroke="#2a9a5a" /><path d="M2 5l7 4 7-4M9 9v8" stroke="#2a9a5a" fill="none" /><path d="M9 16l7-3" stroke="#e03030" strokeWidth="1.500" /></>, text: "模型视图" },
  { indent: "pl-[5px]", exp: "+", check: true, icon: <><path d="M4 3l12-1v12l-14 2z" fill="#fbeaf0" stroke="#e03a60" /><circle cx="9" cy="9" r="4" fill="#a9b9e0" /></>, text: "摄像机" },
  { indent: "pl-[5px]", exp: "-", icon: <><path d="M1 5h6l2 2h6v8H1z" fill="#caa23a" stroke="#7a5a10" /><path d="M1 15l3-6h13l-3 6z" fill="#f8d860" stroke="#7a5a10" /></>, text: "模型历史记录" },
  { indent: "pl-[41px]", box: true, icon: <><polygon points="9,3 16,7 16,14 9,17 2,14 2,7" fill="#fff" stroke="#444" /><path d="M2 7l7 3 7-3M9 10v7" stroke="#444" fill="none" /></> },
  { indent: "pl-[41px]", box: true, icon: <rect x="3" y="2" width="12" height="15" rx="3" fill="#a9c4f5" stroke="#4f6fd0" /> },
  { indent: "pl-[41px]", box: true, icon: <><path d="M3 15L14 4" stroke="#333" /><rect x="1" y="13" width="3" height="3" fill="#d02020" /></> },
  { indent: "pl-[41px]", box: true, icon: blocked },
  { indent: "pl-[41px]", box: true, icon: blocked, text: "体", count: "(5)", muted: true },
  { indent: "pl-[41px]", box: true, icon: <path d="M1 17l6-15h3l6 15h-4l-1-3H6l-1 3zM7 11h3L8.500 6z" fill="#1a1a1a" />, text: "文本", count: "(7)", muted: true },
  { indent: "pl-[41px]", box: true, icon: <path d="M1 17l6-15h3l6 15h-4l-1-3H6l-1 3zM7 11h3L8.500 6z" fill="#1a1a1a" />, text: "文本", count: "(10)", muted: true },
  { indent: "pl-[41px]", box: true, icon: <><path d="M3 1v4M1 3h4" stroke="#d02020" /><path d="M3 8h9l4 3v6H5z" fill="#d0d0d0" stroke="#555" /><path d="M3 5h7v4" stroke="#d02020" fill="none" /></>, text: "抽取的面", count: "(13)" },
];

// dotted tree connectors, drawn under each row's content
function Connectors({ index }: { index: number }) {
  const dotted = "absolute border-dotted border-[#777]";
  return (
    <>
      {index === 0 && <div className={`${dotted} left-[10px] top-[10px] h-[10px] border-l`} />}
      {(index === 1 || index === 2) && <div className={`${dotted} left-[10px] top-0 h-[20px] border-l`} />}
      {index === 3 && <div className={`${dotted} left-[10px] top-0 h-[10px] border-l`} />}
      {index === 0 && <div className={`${dotted} left-[10px] top-[10px] w-[9px] border-t`} />}
      {index === 3 && <div className={`${dotted} left-[29px] top-[16px] h-[4px] border-l`} />}
      {index >= 4 && index <= 10 && <div className={`${dotted} left-[29px] top-0 h-[20px] border-l`} />}
      {index === 11 && <div className={`${dotted} left-[29px] top-0 h-[10px] border-l`} />}
      {index >= 4 && index <= 11 && <div className={`${dotted} left-[29px] top-[10px] w-[12px] border-t`} />}
    </>
  );
}

function Row({ row, index }: { row?: TreeRow; index: number }) {
  const zebra = index % 2 === 0 ? "bg-white" : "bg-[#f7f7f7]";
  return (
    <div className={`relative flex h-[20px] shrink-0 border-b border-[#e6e6e6] ${zebra} text-[12px]`}>
      <div className="flex w-[201px] min-w-0 items-center border-r border-[#e6e6e6]">
        <Connectors index={index} />
        {row && (
          <div className={`relative flex items-center gap-[2px] whitespace-nowrap ${row.indent}`}>
            {row.exp && <Expander minus={row.exp === "-"} />}
            {row.exp && !row.check && <span className="w-0" />}
            {row.check && <span className="w-[6px]" />}
            {row.check && <Check />}
            {row.box && <CheckBox />}
            <RowIcon>{row.icon}</RowIcon>
            {row.text && (
              <span className={`ml-px pt-px ${row.muted ? "text-[#8a8a8a]" : "text-[#222]"}`}>
                {row.text}
                {row.count && <Count value={row.count} />}
              </span>
            )}
          </div>
        )}
      </div>
    </div>
  );
}

function PartNavigator() {
  return (
    <div className="flex w-[258px] shrink-0 flex-col border-r-[3px] border-[#767676] bg-[#ececec]">
      <div className="flex h-[36px] shrink-0 items-center pl-[10px] pt-[7px]">
        <svg viewBox="0 0 14 14" className="h-[13px] w-[13px]">
          <path d="M2 9l6-7 4 3-6 7z" fill="#e8d840" stroke="#222" />
          <circle cx="4" cy="10" r="2.500" fill="#222" />
        </svg>
        <span className="ml-[12px] text-[12px] font-bold text-[#111]">部件导航器</span>
      </div>
      <div className="ml-[5px] flex h-[685px] w-[242px] shrink-0 flex-col overflow-hidden border border-[#666] bg-white">
        <div className="flex h-[17px] shrink-0 items-center border-b border-[#888] bg-[#ececec] pl-[7px] pt-px text-[12px] text-[#222]">
          <span>名称</span>
          <span className="ml-[15px] h-0 w-0 border-x-[5px] border-b-[5px] border-x-transparent border-b-[#222]" />
        </div>
        <div className="flex min-h-0 flex-1 flex-col overflow-hidden">
          {Array.from({ length: 33 }, (_, i) => (
            <Row key={i} index={i} row={treeRows[i]} />
          ))}
        </div>
        <div className="flex h-[17px] shrink-0 items-center bg-[#ececec] px-[4px]">
          <div className="h-0 w-0 border-y-[4px] border-r-[4px] border-y-transparent border-r-[#333]" />
          <div className="ml-[10px] flex h-[15px] w-[159px] items-center justify-center rounded-[2px] border border-[#8a8a8a] bg-gradient-to-b from-[#f3f3f3] to-[#c8c8c8] text-[9px] leading-none text-[#555]">III</div>
          <div className="ml-auto h-0 w-0 border-y-[4px] border-l-[4px] border-y-transparent border-l-[#333]" />
        </div>
      </div>
      <div className="flex h-[13px] shrink-0 items-center px-[5px]">
        <div className="h-px flex-1 bg-[#bcbcbc]" />
        <div className="mx-[5px] h-[6px] w-[42px] border border-[#9a9a9a] bg-[#d8d8d8]" />
        <div className="h-px flex-1 bg-[#bcbcbc]" />
      </div>
      <div className="ml-[6px] w-[241px] border-r border-l border-[#cfcfcf]">
        <NavHeader title="相依性" />
        <NavHeader title="细节" />
        <div className="flex h-[6px]">
          <div className="flex-1" />
          <div className="w-[23px] border-l border-[#9a9a9a]" />
        </div>
      </div>
    </div>
  );
}

function NavHeader({ title }: { title: string }) {
  return (
    <div className="flex h-[23px] items-stretch border-b border-[#8f8f8f] bg-gradient-to-b from-[#f8f8f8] via-[#f2f2f2] to-[#d6d6d6]">
      <div className="flex flex-1 items-center pl-[5px] pt-[2px] text-[12px] font-bold text-[#111] [text-shadow:1px_1px_0_#fff]">{title}</div>
      <div className="flex w-[23px] items-center justify-center border-l border-[#9a9a9a]">
        <Chevron />
      </div>
    </div>
  );
}

function Cylinder() {
  return (
    <svg viewBox="0 0 1402 953" className="absolute left-[-258px] top-[-168px] h-[953px] w-[1402px]">
      <defs>
        <linearGradient id="body" x1="694" x2="1076" y1="0" y2="0" gradientUnits="userSpaceOnUse">
          <stop offset="0" stopColor="#609f5c" />
          <stop offset="0.19" stopColor="#558b52" />
          <stop offset="0.45" stopColor="#6cb165" />
          <stop offset="0.7" stopColor="#6cb165" />
          <stop offset="0.8" stopColor="#5c9a58" />
          <stop offset="1" stopColor="#6aab62" />
        </linearGradient>
        <linearGradient id="rim" x1="694" x2="1062" y1="0" y2="0" gradientUnits="userSpaceOnUse">
          <stop offset="0" stopColor="#6eb165" />
          <stop offset="0.6" stopColor="#6cae63" />
          <stop offset="0.85" stopColor="#4f824a" />
          <stop offset="1" stopColor="#5e955a" />
        </linearGradient>
      </defs>
      <path d="M694 360L707 784C790 808 990 806 1076 770L1062 346Z" fill="url(#body)" />
      <ellipse cx="878" cy="352.500" rx="184.500" ry="24" transform="rotate(-1.700 878 352.500)" fill="url(#rim)" />
    </svg>
  );
}

function Triad() {
  return (
    <svg viewBox="0 0 64 64" className="h-[64px] w-[64px] overflow-visible">
      <path d="M12 23l3-2h25v24l-3 3H12z" fill="#cdcecd" stroke="#b0b0b0" />
      <path d="M15 21v24h25M15 45l-3 3" fill="none" stroke="#b8b8b8" />
      <path d="M11 50V18" stroke="#1040e0" strokeWidth="3" />
      <polygon points="11,8 15,21 7,21" fill="#1040e0" />
      <path d="M11 50H46" stroke="#d03030" strokeWidth="2.400" />
      <polygon points="54,50 43,46.500 43,53.500" fill="#d03030" />
      <path d="M13 48l5-8" stroke="#8fc090" />
      <circle cx="11" cy="50" r="4.500" fill="#c8c8c8" stroke="#888" />
      <text x="9" y="7" textAnchor="middle" fontSize="11" fill="#1040e0" fontFamily="Liberation Sans">Z</text>
      <text x="59" y="54" textAnchor="middle" fontSize="11" fill="#e05050" fontFamily="Liberation Sans">X</text>
    </svg>
  );
}

function Watermark() {
  return (
    <div className="flex items-center">
      <svg viewBox="0 0 72 82" className="h-[82px] w-[72px] shrink-0">
        <path d="M36 0L51 8C56 14 57 20 56 25L36 15C30 11 22 9 14 10Z" fill="#cbe6f6" />
        <path d="M51 8L71 20V37C69 44 64 50 58 54V32L56 25C57 20 56 14 51 8Z" fill="#8ed2f4" />
        <path d="M71 37V62L51 72L37 63L58 52C64 50 69 44 71 37Z" fill="#79c4ea" />
        <path d="M17 53L36 64L51 72L36 81L17 70Z" fill="#76cbf3" />
        <path d="M0 62V40C3 35 8 32 14 30V52L17 53V72Z" fill="#a0d8f6" />
        <path d="M0 19L14 10C22 9 30 11 36 15L14 30C8 32 3 35 0 40Z" fill="#b5def5" />
        <polygon points="36,15 57,27 57,52 36,64 15,52 15,27" fill="#e6e7e9" />
        <polygon points="36,22 51,31 36,41 20,31" fill="#b9e2f8" />
        <polygon points="20,31 36,41 36,60 20,51" fill="#9fd5f5" />
        <polygon points="51,31 36,41 36,60 51,51" fill="#78c2ea" />
      </svg>
      <div className="ml-[8px] flex flex-col pt-[3px] text-[#f1f2f4]">
        <span className="whitespace-nowrap text-[42px] font-bold leading-[46px]">3D世界网</span>
        <span className="ml-[2px] whitespace-nowrap text-[13px] font-bold leading-[14px] tracking-[4.400px]">WWW.3DSJW.COM</span>
      </div>
    </div>
  );
}

function Viewport() {
  return (
    <div className="relative flex-1 overflow-hidden bg-[linear-gradient(#bcbcbe,#e6e7e9_75%)]">
      <Cylinder />
      <span className="absolute left-[557px] top-[215px] font-['Liberation_Serif',serif] text-[32px] font-bold leading-[36px] text-[#ff20ff]">MAX</span>
      <ErrorDialog />
      <div className="absolute left-[53px] top-[692px]">
        <Triad />
      </div>
      <div className="absolute left-[861px] top-[690px]">
        <Watermark />
      </div>
    </div>
  );
}

export default function App() {
  return (
    <div className={`relative flex h-[953px] w-[1402px] flex-col overflow-hidden bg-[#e0e0e0] ${CJK}`}>
      <MenuBar />
      <Toolbars />
      <SelectionBar />
      <StatusBar />
      <div className="flex min-h-0 flex-1">
        <PartNavigator />
        <Viewport />
      </div>
      <SplitDialog />
    </div>
  );
}
